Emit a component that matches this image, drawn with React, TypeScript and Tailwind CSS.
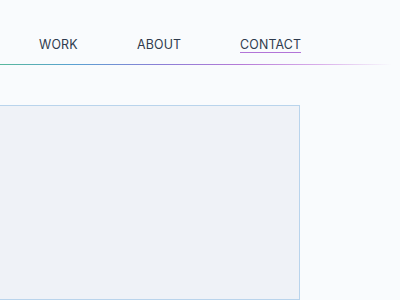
export default function App() {
  return (
    <div className="w-[400px] h-[300px] overflow-hidden bg-[#f9fbfd] flex flex-col" style={{ fontFamily: "Inter, 'Noto Sans', sans-serif" }}>
      <nav className="h-[64px] flex items-start pt-[37px] pl-[39px] text-[12.4px] text-[#2f3b4e] tracking-[0.015em]">
        <span className="leading-[15px] w-[98px]">WORK</span>
        <span className="leading-[15px] w-[103px]">ABOUT</span>
        <span className="leading-[15px] border-b border-[#b274d8]">CONTACT</span>
      </nav>
      <div className="h-px w-full bg-[linear-gradient(to_right,#58b89c_0%,#5aa2d2_18%,#8b7fd6_40%,#b57ad7_60%,#d9aeea_80%,rgba(249,251,253,0)_98%)]" />
      <div className="mt-[40px] flex-1 w-[302px] ml-[-2px] bg-[#eff2f7] border border-[#b9d4ec]" />
    </div>
  );
}
